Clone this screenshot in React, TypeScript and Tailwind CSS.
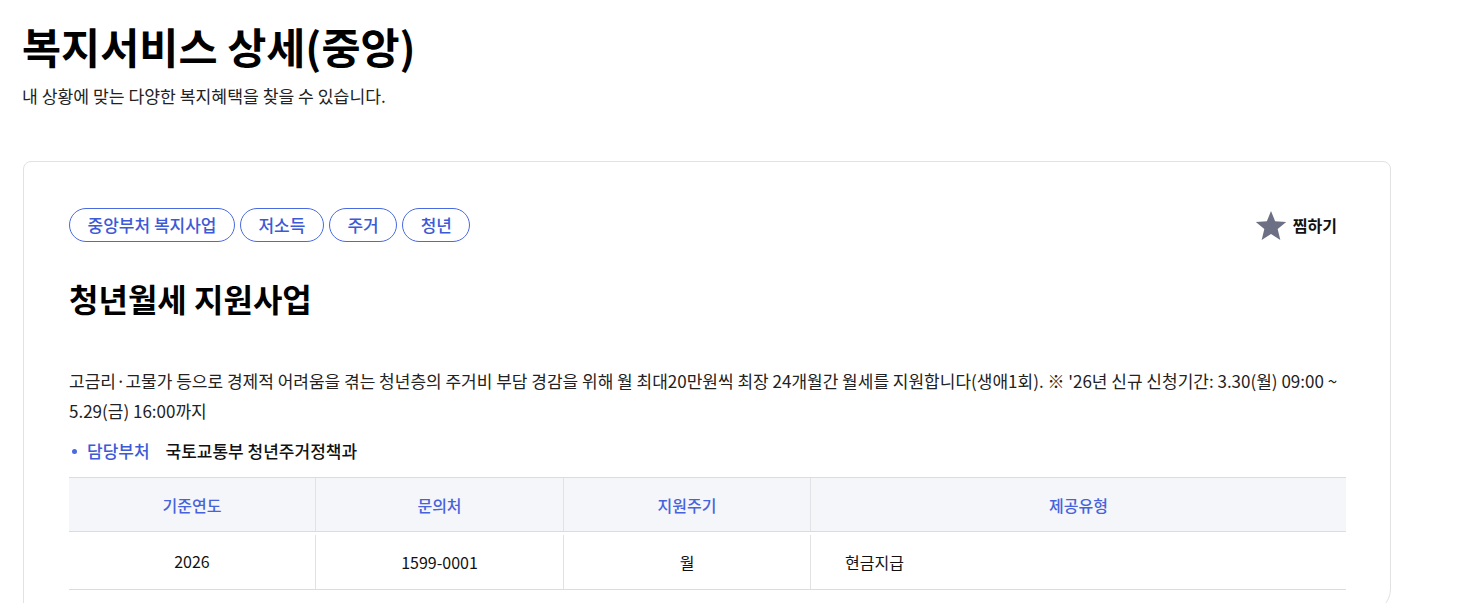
import React from "react";

const font = { fontFamily: '"Noto Sans CJK KR", "Noto Sans", sans-serif' };

function Star() {
  return (
    <svg width="32" height="31" viewBox="0 0 24 23" aria-hidden="true">
      <path
        d="M12 0.6l3.1 7.7 8.3 0.6-6.4 5.3 2 8.1-7-4.4-7 4.4 2-8.1L0.6 8.9l8.3-0.6z"
        fill="#6d7084"
      />
    </svg>
  );
}

export default function App() {
  const tags = ["중앙부처 복지사업", "저소득", "주거", "청년"];
  const heads = ["기준연도", "문의처", "지원주기", "제공유형"];
  return (
    <div className="min-h-[603px] bg-white text-[#111] overflow-hidden" style={font}>
      <div className="pl-[22px] pt-[21px]">
        <h1 className="text-[42.5px] leading-[50px] font-bold text-black">
          복지서비스 상세(중앙)
        </h1>
        <p className="mt-[13px] text-[17.2px] leading-[24px] text-[#222]">
          내 상황에 맞는 다양한 복지혜택을 찾을 수 있습니다.
        </p>
      </div>

      <div className="ml-[23px] mt-[53px] w-[1368px] border border-[#e2e2e2] rounded-tl-[8px] rounded-tr-[8px] rounded-bl-[8px] rounded-br-[24px] pl-[45px] pr-[44px] pt-[46px] pb-[22px]">
        <div className="flex items-center justify-between">
          <div className="flex gap-[5px]">
            {tags.map((t) => (
              <span
                key={t}
                className="h-[34px] px-[17.5px] flex items-center rounded-full border border-[#4a6ae0] text-[#3d5ad6] text-[17px] font-medium"
              >
                {t}
              </span>
            ))}
          </div>
          <div className="flex items-center gap-[6px] mr-[9px]">
            <Star />
            <span className="text-[16px] font-bold text-[#111]">찜하기</span>
          </div>
        </div>

        <h2 className="mt-[36px] text-[32px] leading-[40px] font-bold text-black">
          청년월세 지원사업
        </h2>

        <p className="mt-[48px] mr-[-4px] text-[17px] leading-[30px] text-[#222]">
          고금리·고물가 등으로 경제적 어려움을 겪는 청년층의 주거비 부담 경감을 위해 월 최대20만원씩 최장
          24개월간 월세를 지원합니다(생애1회). ※ '26년 신규 신청기간: 3.30(월) 09:00 ~ 5.29(금) 16:00까지
        </p>

        <div className="mt-[13px] flex items-center h-[24px] text-[17px]">
          <span className="ml-[3px] w-[5px] h-[5px] rounded-full bg-[#4a6ae0]" />
          <span className="ml-[10px] text-[#3d5ad6] font-medium">담당부처</span>
          <span className="ml-[16px] font-medium text-[#111]">국토교통부 청년주거정책과</span>
        </div>

        <div className="mt-[14px] border-t border-b border-[#dcdcdc]">
          <div className="grid grid-cols-[246px_248px_247px_1fr] bg-[#f5f6fa] border-b border-[#dcdcdc] h-[54px]">
            {heads.map((h, i) => (
              <div
                key={h}
                className={`flex items-center justify-center text-[16px] font-medium text-[#4663dc] ${
                  i > 0 ? "border-l border-[#e2e2e2]" : ""
                }`}
              >
                {h}
              </div>
            ))}
          </div>
          <div className="grid grid-cols-[246px_248px_247px_1fr] h-[57px] text-[16px] text-[#111]">
            <div className="flex items-center justify-center">2026</div>
            <div className="flex items-center justify-center border-l border-[#e2e2e2] mt-[3px]">1599-0001</div>
            <div className="flex items-center justify-center border-l border-[#e2e2e2] mt-[3px]">월</div>
            <div className="flex items-center pl-[34px] border-l border-[#e2e2e2] mt-[3px]">현금지급</div>
          </div>
        </div>
      </div>
    </div>
  );
}
